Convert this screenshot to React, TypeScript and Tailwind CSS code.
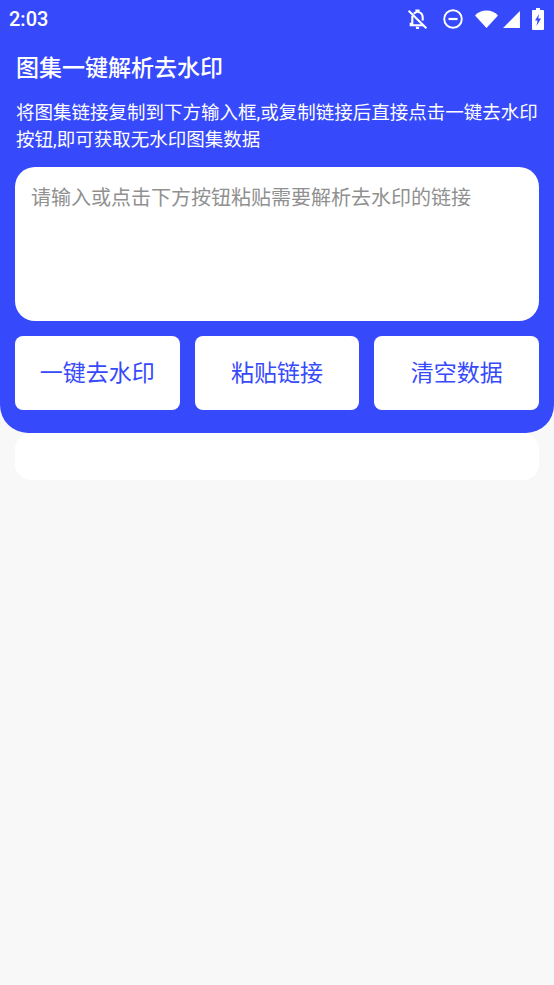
const cjk = "font-['Roboto','Noto_Sans_CJK_SC',sans-serif]";

function StatusIcons() {
  return (
    <div className="flex items-center text-white">
      <svg width="25" height="25" viewBox="0 0 24 24" fill="none" stroke="white" strokeWidth="2" className="mr-[12px]">
        <path d="M7 8.500V16H5.500v1.500h12M8.500 6.500C9.300 5.600 10.200 5 11 4.800V3.500h2v1.300c2.400.6 4 2.800 4 5.400V13" />
        <path d="M10.500 20h3" strokeWidth="2.200" />
        <path d="M3.500 3.500l17 17" />
      </svg>
      <svg width="22" height="22" viewBox="0 0 22 22" fill="none" stroke="white" className="mr-[10px]">
        <circle cx="11" cy="11" r="8.800" strokeWidth="1.900" />
        <path d="M6.500 11h9" strokeWidth="2.200" />
      </svg>
      <svg width="25" height="20" viewBox="0 0 24 20" fill="white" className="mr-[3px]">
        <path d="M0.500 6.500C3.500 3.200 7.500 1.500 12 1.500s8.500 1.700 11.500 5L12 19z" />
      </svg>
      <svg width="19" height="19" viewBox="0 0 18 18" fill="white" className="mr-[11px]">
        <path d="M17 1v16H1z" />
      </svg>
      <svg width="12" height="22" viewBox="0 0 12 22" fill="white" className="mr-[10px]">
        <path
          fillRule="evenodd"
          d="M4 0h4v2h3a1 1 0 0 1 1 1v18a1 1 0 0 1-1 1H1a1 1 0 0 1-1-1V3a1 1 0 0 1 1-1h3zM7 6L3 12.500h2.500L4.500 18 9 10.500H6.300z"
        />
      </svg>
    </div>
  );
}

function ActionButton({ label }: { label: string }) {
  return (
    <button className="flex h-[74px] flex-1 items-center justify-center rounded-lg bg-white pt-[3px] text-[23px] text-[#374afb]">
      {label}
    </button>
  );
}

export default function App() {
  return (
    <div className={`flex min-h-[985px] flex-col bg-[#f8f8f8] ${cjk}`}>
      <div className="rounded-b-[28px] bg-[#374afb] px-[15px] pb-[23px]">
        <div className="-mx-[15px] flex h-[38px] items-center justify-between pl-[9px]">
          <span className="text-[20px] font-medium text-white">2:03</span>
          <StatusIcons />
        </div>
        <h1 className="mt-[15px] pl-px text-[23px] leading-8 font-medium text-white">图集一键解析去水印</h1>
        <p className="mt-[15px] pl-px text-[18.5px] leading-[27px] whitespace-nowrap text-white">
          将图集链接复制到下方输入框,或复制链接后直接点击一键去水印
          <br />
          按钮,即可获取无水印图集数据
        </p>
        <div className="mt-[13px] h-[154px] rounded-[20px] bg-white px-[16px] pt-[17px] text-[20px] leading-7 text-[#909090]">
          请输入或点击下方按钮粘贴需要解析去水印的链接
        </div>
        <div className="mt-[15px] flex gap-[15px]">
          <ActionButton label="一键去水印" />
          <ActionButton label="粘贴链接" />
          <ActionButton label="清空数据" />
        </div>
      </div>
      <div className="mx-[15px] h-[47px] rounded-[16px] bg-white" />
    </div>
  );
}
